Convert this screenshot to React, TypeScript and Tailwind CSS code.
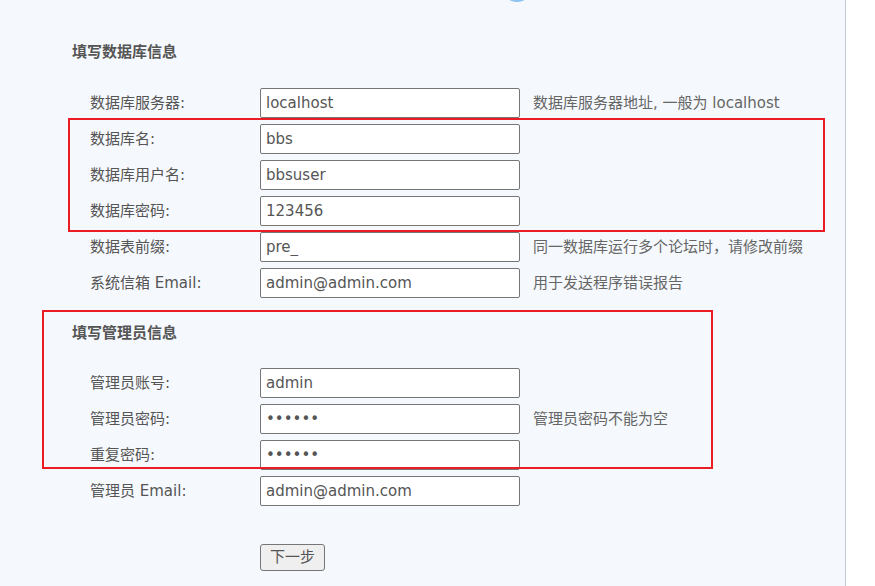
import React from 'react'

type Field = { label: string; value: string; hint?: string; password?: boolean }

const dbFields: Field[] = [
  { label: '数据库服务器:', value: 'localhost', hint: '数据库服务器地址, 一般为 localhost' },
  { label: '数据库名:', value: 'bbs' },
  { label: '数据库用户名:', value: 'bbsuser' },
  { label: '数据库密码:', value: '123456' },
  { label: '数据表前缀:', value: 'pre_', hint: '同一数据库运行多个论坛时，请修改前缀' },
  { label: '系统信箱 Email:', value: 'admin@admin.com', hint: '用于发送程序错误报告' },
]

const adminFields: Field[] = [
  { label: '管理员账号:', value: 'admin' },
  { label: '管理员密码:', value: '123456', password: true, hint: '管理员密码不能为空' },
  { label: '重复密码:', value: '123456', password: true },
  { label: '管理员 Email:', value: 'admin@admin.com' },
]

function Row({ f }: { f: Field }) {
  return (
    <div className="flex h-[36px] items-center">
      <label className="w-[170px] pl-[90px] box-content shrink-0 whitespace-nowrap">{f.label}</label>
      <input
        type={f.password ? 'password' : 'text'}
        value={f.value}
        readOnly
        className="h-[30px] w-[260px] shrink-0 rounded-[2px] border border-[#767676] bg-white px-[5px] text-[15px] text-[#555] outline-none"
      />
      {f.hint && <span className="ml-[13px] whitespace-nowrap text-[#666]">{f.hint}</span>}
    </div>
  )
}

export default function App() {
  return (
    <div
      className="flex h-[586px] w-[875px] overflow-hidden bg-white text-[15px] text-[#555]"
      style={{ fontFamily: '"DejaVu Sans", "Noto Sans CJK SC", sans-serif' }}
    >
      <div className="relative h-full w-[846px] shrink-0 border-r border-[#c3cad2] bg-[#f5f9fd]">
        {/* step dot cut off at the top */}
        <div className="absolute left-[502px] top-[-28px] h-[30px] w-[30px] rounded-full bg-[#8cc3f1] blur-[0.5px]" />

        <div className="flex flex-col pt-[42px]">
          <h2 className="pl-[72px] text-[15px] font-bold leading-[20px] text-[#555]">填写数据库信息</h2>
          <div className="mt-[23px] flex flex-col">
            {dbFields.map((f) => (
              <Row key={f.label} f={f} />
            ))}
          </div>

          <h2 className="mt-[22px] pl-[72px] text-[15px] font-bold leading-[20px] text-[#555]">填写管理员信息</h2>
          <div className="mt-[22px] flex flex-col">
            {adminFields.map((f) => (
              <Row key={f.label} f={f} />
            ))}
          </div>

          <div className="mt-[35px] pl-[260px]">
            <button className="h-[27px] w-[65px] rounded-[3px] border border-[#767676] bg-[#efefef] text-[15px] text-[#555]">
              下一步
            </button>
          </div>
        </div>

        {/* red annotation boxes */}
        <div className="pointer-events-none absolute left-[68px] top-[118px] h-[114px] w-[757px] border-2 border-[#ec1c24]" />
        <div className="pointer-events-none absolute left-[42px] top-[310px] h-[159px] w-[671px] border-2 border-[#ec1c24]" />
      </div>
    </div>
  )
}
